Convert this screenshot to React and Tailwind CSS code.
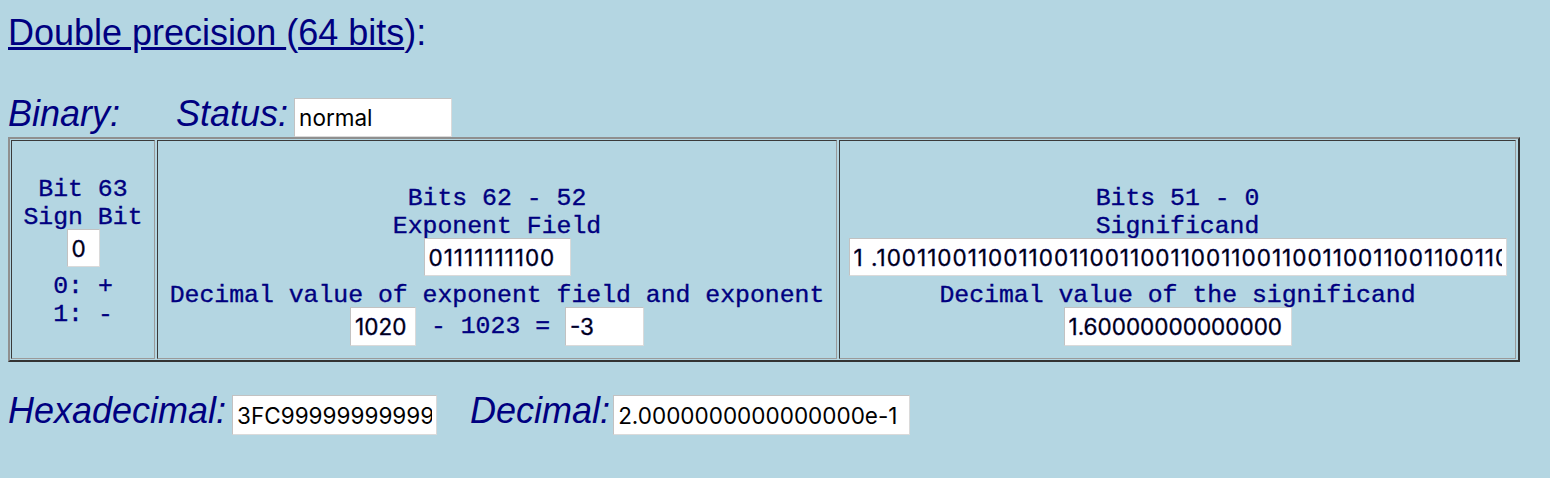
import React from "react";

const inp =
  "h-[38px] bg-white border border-[#c2c2c2] border-b-[#dadada] border-r-[#dadada] px-[4px] text-black text-[22.5px] font-['Inter',sans-serif] outline-none";
const mono =
  "font-['Liberation_Mono','Courier_New',monospace] text-[24.8px] text-[#000080] [-webkit-text-stroke:0.35px_#000080]";
const line = "pt-[4px] leading-[24px]";
const sans = "font-['Liberation_Sans',Arial,sans-serif]";
const label = "italic text-[36px] leading-[31px] text-[#000080]";
const cell =
  "border border-t-[#3a3a3a] border-l-[#3a3a3a] border-b-[#9a9a9a] border-r-[#9a9a9a] flex flex-col items-center";

export default function App() {
  return (
    <div className={`min-h-screen w-full bg-[#b4d6e2] pl-[8px] pt-[12px] ${sans}`}>
      <div className="h-[41px] text-[36px] leading-[41px] text-[#000080]">
        <a href="#" className="underline">Double precision </a>(
        <a href="#" className="underline">64 bits</a>):
      </div>

      <div className="mt-[45px] flex items-start h-[39px]">
        <span className={label}>Binary:</span>
        <span className={`ml-[56px] ${label}`}>Status:</span>
        <input readOnly value="normal" className={`${inp} ml-[6px] w-[158px] h-[39px]`} />
      </div>

      <div className="flex w-[1512px] h-[225px] border-2 border-t-[#8f8f8f] border-l-[#8f8f8f] border-b-[#333] border-r-[#333] p-[1px] gap-[2px]">
        <div className={`${cell} w-[144px] justify-center ${mono}`}>
          <div className={line}>Bit 63</div>
          <div className={line}>Sign Bit</div>
          <input readOnly value="0" className={`${inp} w-[33px]`} />
          <div className={`mt-[3px] ${line}`}>0: +</div>
          <div className={line}>1: -</div>
        </div>

        <div className={`${cell} w-[680px] pt-[41px] ${mono}`}>
          <div className={line}>Bits 62 - 52</div>
          <div className={line}>Exponent Field</div>
          <input readOnly value="01111111100" className={`${inp} w-[147px] tracking-[1px]`} />
          <div className={`mt-[3px] ${line}`}>Decimal value of exponent field and exponent</div>
          <div className="flex items-center">
            <input readOnly value="1020" className={`${inp} w-[66px] h-[39px]`} />
            <span className="whitespace-pre"> - 1023 = </span>
            <input readOnly value="-3" className={`${inp} w-[79px] h-[39px]`} />
          </div>
        </div>

        <div className={`${cell} w-[677px] pt-[41px] ${mono}`}>
          <div className={line}>Bits 51 - 0</div>
          <div className={line}>Significand</div>
          <input
            readOnly
            value="1 .1001100110011001100110011001100110011001100110011010"
            className={`${inp} w-[658px] tracking-[1px]`}
          />
          <div className={`mt-[3px] ${line}`}>Decimal value of the significand</div>
          <input readOnly value="1.60000000000000" className={`${inp} w-[228px] h-[39px]`} />
        </div>
      </div>

      <div className="mt-[33px] flex items-start h-[40px]">
        <span className={label}>Hexadecimal:</span>
        <input readOnly value="3FC999999999999A" className={`${inp} ml-[6px] w-[205px] h-[40px]`} />
        <span className={`ml-[33px] ${label}`}>Decimal:</span>
        <input readOnly value="2.0000000000000000e-1" className={`${inp} ml-[3px] w-[297px] h-[40px]`} />
      </div>
    </div>
  );
}
